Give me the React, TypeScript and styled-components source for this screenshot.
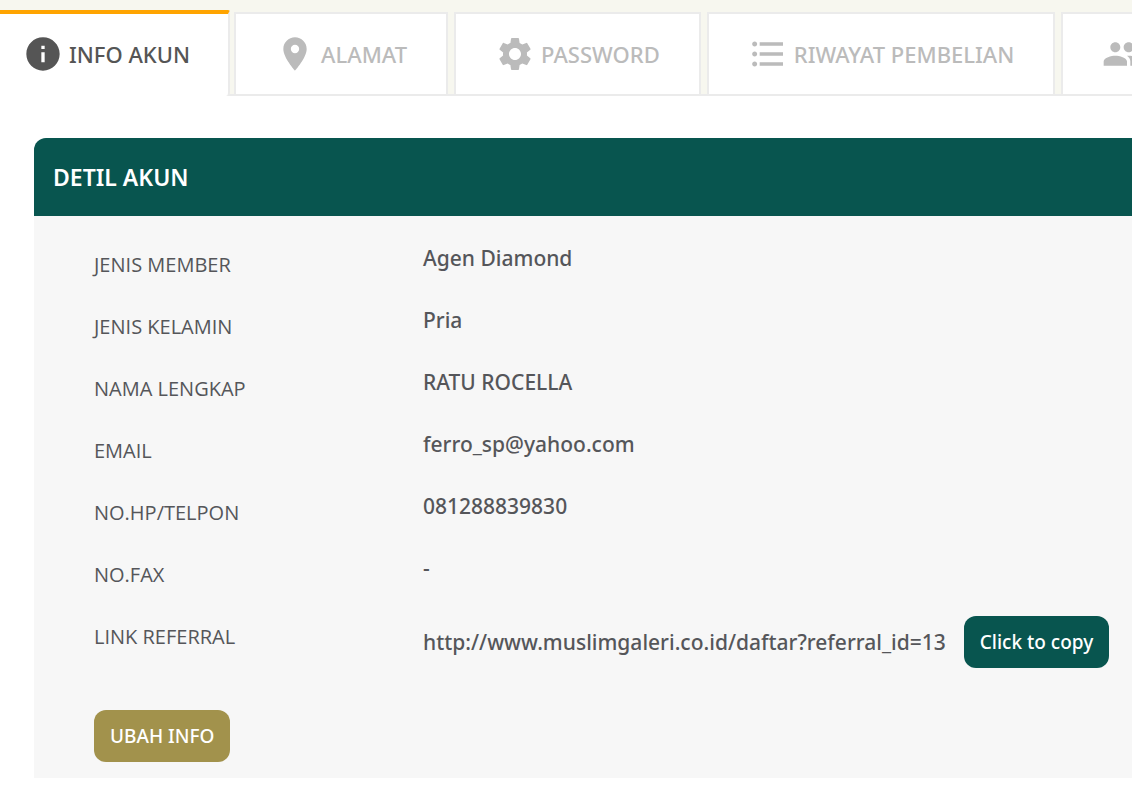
import React from "react";
import styled, { createGlobalStyle, css } from "styled-components";
import type { IconType } from "react-icons";
import {
  MdFormatListBulleted,
  MdInfo,
  MdPeople,
  MdPlace,
  MdSettings,
} from "react-icons/md";

const GlobalStyle = createGlobalStyle`
  *, *::before, *::after { box-sizing: border-box; }
  body {
    margin: 0;
    background: #fff;
    color: #55565a;
    font-family: "Noto Sans", "Open Sans", sans-serif;
    overflow-x: hidden;
  }
`;

const TabBar = styled.nav`
  display: flex;
  align-items: flex-end;
  gap: 6px;
  padding-top: 10px;
  overflow: hidden;
  background: linear-gradient(#ebebeb, #ebebeb) bottom / 100% 2px no-repeat #f7f7ef;
`;

const Tab = styled.a<{ $active?: boolean }>`
  display: flex;
  flex: none;
  align-items: center;
  gap: 6px;
  height: 84px;
  padding: 0 39px;
  border: 2px solid #ebebeb;
  background: #fff;
  color: #bbb;
  font-size: 22px;
  font-weight: 500;
  line-height: 30px;
  text-decoration: none;
  white-space: nowrap;

  svg {
    flex: none;
    width: 40px;
    height: 40px;
  }

  ${({ $active }) =>
    $active &&
    css`
      height: 86px;
      margin-right: -2px;
      padding: 0 38px 2px 23px;
      border-width: 4px 2px 0 0;
      border-top-color: #ffa400;
      border-bottom-right-radius: 4px;
      border-top-right-radius: 2px;
      color: #555;
    `}
`;

const Content = styled.main`
  padding: 42px 0 18px 34px;
`;

const Panel = styled.section`
  border-top-left-radius: 12px;
  overflow: hidden;
  background: #f7f7f7;
`;

const PanelTitle = styled.h2`
  margin: 0;
  padding: 24px 19px;
  background: #08554f;
  color: #fff;
  font-size: 23px;
  font-weight: 600;
  line-height: 30px;
`;

const PanelBody = styled.div`
  padding: 20px 22px 16px 60px;
`;

const Details = styled.dl`
  margin: 0 0 40px;
`;

const DetailRow = styled.div`
  display: grid;
  grid-template-columns: 329px 1fr;
  align-items: start;
  min-height: 62px;
`;

const Label = styled.dt`
  padding-top: 15px;
  font-family: "Open Sans", sans-serif;
  font-size: 20px;
  line-height: 28px;
`;

const Value = styled.dd`
  display: flex;
  align-items: center;
  gap: 18px;
  margin: 0;
  padding-top: 8px;
  font-size: 21px;
  font-weight: 500;
  line-height: 28px;
  white-space: nowrap;
`;

const Button = styled.button<{ $tone: "teal" | "gold" }>`
  height: 52px;
  padding: 0 16px;
  border: 0;
  border-radius: 12px;
  background: ${({ $tone }) => ($tone === "teal" ? "#08554f" : "#a2924c")};
  color: #fff;
  font-family: inherit;
  font-size: 19px;
  font-weight: 500;
  line-height: 28px;
  white-space: nowrap;
  cursor: pointer;
`;

const tabs: { id: string; label?: string; icon: IconType; active?: boolean }[] = [
  { id: "info", label: "INFO AKUN", icon: MdInfo, active: true },
  { id: "alamat", label: "ALAMAT", icon: MdPlace },
  { id: "password", label: "PASSWORD", icon: MdSettings },
  { id: "riwayat", label: "RIWAYAT PEMBELIAN", icon: MdFormatListBulleted },
  { id: "people", icon: MdPeople },
];

const referralLink = "http://www.muslimgaleri.co.id/daftar?referral_id=13";

const details: { label: string; value: string }[] = [
  { label: "JENIS MEMBER", value: "Agen Diamond" },
  { label: "JENIS KELAMIN", value: "Pria" },
  { label: "NAMA LENGKAP", value: "RATU ROCELLA" },
  { label: "EMAIL", value: "ferro_sp@yahoo.com" },
  { label: "NO.HP/TELPON", value: "081288839830" },
  { label: "NO.FAX", value: "-" },
];

export default function App() {
  return (
    <>
      <GlobalStyle />
      <TabBar>
        {tabs.map(({ id, label, icon: Icon, active }) => (
          <Tab
            key={id}
            href={`#${id}`}
            $active={active}
            aria-current={active ? "page" : undefined}
          >
            <Icon aria-hidden />
            {label}
          </Tab>
        ))}
      </TabBar>
      <Content>
        <Panel>
          <PanelTitle>DETIL AKUN</PanelTitle>
          <PanelBody>
            <Details>
              {details.map(({ label, value }) => (
                <DetailRow key={label}>
                  <Label>{label}</Label>
                  <Value>{value}</Value>
                </DetailRow>
              ))}
              <DetailRow>
                <Label>LINK REFERRAL</Label>
                <Value>
                  {referralLink}
                  <Button
                    type="button"
                    $tone="teal"
                    onClick={() => navigator.clipboard?.writeText(referralLink)}
                  >
                    Click to copy
                  </Button>
                </Value>
              </DetailRow>
            </Details>
            <Button type="button" $tone="gold">
              UBAH INFO
            </Button>
          </PanelBody>
        </Panel>
      </Content>
    </>
  );
}
